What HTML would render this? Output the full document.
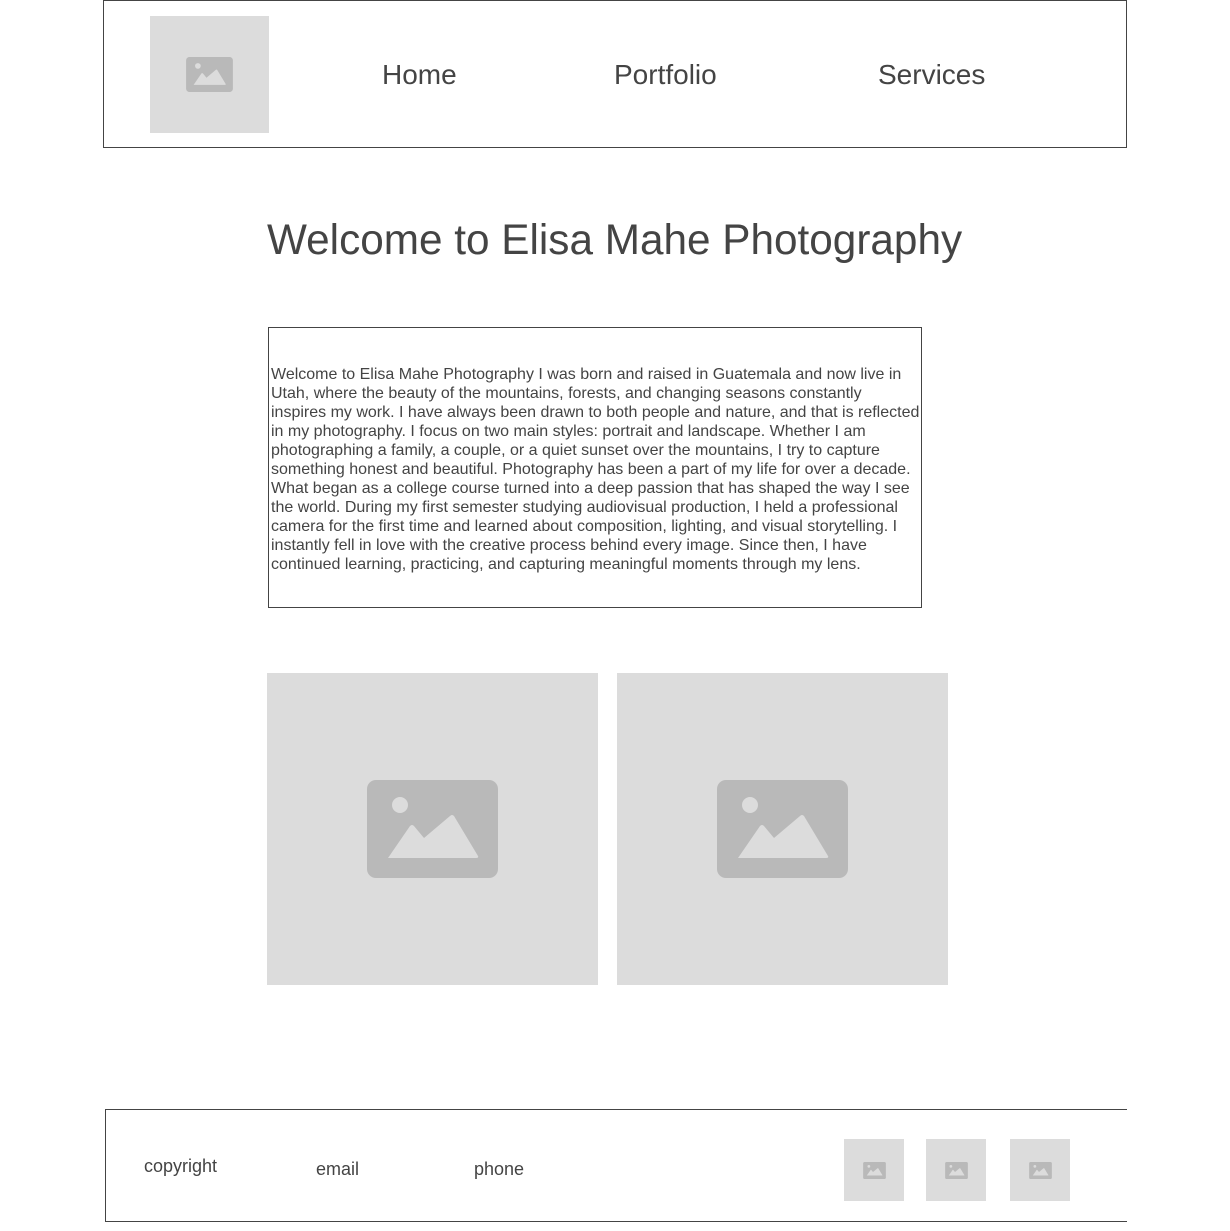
<!DOCTYPE html>
<html><head><meta charset="utf-8"><style>
body{margin:0;width:1230px;height:1231px;background:#fff;position:relative;font-family:"Liberation Sans",sans-serif;color:#444;overflow:hidden}
.a{position:absolute}
.ph{position:absolute;background:#dcdcdc;display:flex;align-items:center;justify-content:center}
.t{position:absolute;white-space:nowrap}
</style></head><body>
<svg width="0" height="0" style="position:absolute"><defs><symbol id="ic" viewBox="0 0 131 98"><rect width="131" height="98" rx="9" fill="#b9b9b9"/><circle cx="33" cy="25" r="8" fill="#dcdcdc"/><path d="M21 78 L43 46 Q45 44 47 46 L57 58 L83 36 Q85 34 87 36 L111 76 Q112 78 109 78 Z" fill="#dcdcdc"/></symbol></defs></svg>

<div class="a" style="left:103px;top:0;width:1022px;height:146px;border:1px solid #444"></div>
<div class="ph" style="left:150px;top:16px;width:119px;height:117px"><svg width="47" height="35"><use href="#ic"/></svg></div>
<div class="t" style="left:382px;top:59px;font-size:28px">Home</div>
<div class="t" style="left:614px;top:59px;font-size:28px">Portfolio</div>
<div class="t" style="left:878px;top:59px;font-size:28px">Services</div>

<div class="t" style="left:267px;top:216px;font-size:42.3px">Welcome to Elisa Mahe Photography</div>

<div class="a" style="left:268px;top:327px;width:652px;height:279px;border:1px solid #444"></div>
<div class="a" style="left:271px;top:365px;width:650px;font-size:16px;line-height:19px">Welcome to Elisa Mahe Photography I was born and raised in Guatemala and now live in Utah, where the beauty of the mountains, forests, and changing seasons constantly inspires my work. I have always been drawn to both people and nature, and that is reflected in my photography. I focus on two main styles: portrait and landscape. Whether I am photographing a family, a couple, or a quiet sunset over the mountains, I try to capture something honest and beautiful. Photography has been a part of my life for over a decade. What began as a college course turned into a deep passion that has shaped the way I see the world. During my first semester studying audiovisual production, I held a professional camera for the first time and learned about composition, lighting, and visual storytelling. I instantly fell in love with the creative process behind every image. Since then, I have continued learning, practicing, and capturing meaningful moments through my lens.</div>

<div class="ph" style="left:267px;top:673px;width:331px;height:312px"><svg width="131" height="98"><use href="#ic"/></svg></div>
<div class="ph" style="left:617px;top:673px;width:331px;height:312px"><svg width="131" height="98"><use href="#ic"/></svg></div>

<div class="a" style="left:105px;top:1109px;width:1021px;height:111px;border:1px solid #444;border-right:none"></div>
<div class="t" style="left:144px;top:1156px;font-size:18px">copyright</div>
<div class="t" style="left:316px;top:1159px;font-size:18px">email</div>
<div class="t" style="left:474px;top:1159px;font-size:18px">phone</div>
<div class="ph" style="left:844px;top:1139px;width:60px;height:62px"><svg width="23" height="17"><use href="#ic"/></svg></div>
<div class="ph" style="left:926px;top:1139px;width:60px;height:62px"><svg width="23" height="17"><use href="#ic"/></svg></div>
<div class="ph" style="left:1010px;top:1139px;width:60px;height:62px"><svg width="23" height="17"><use href="#ic"/></svg></div>
</body></html>
